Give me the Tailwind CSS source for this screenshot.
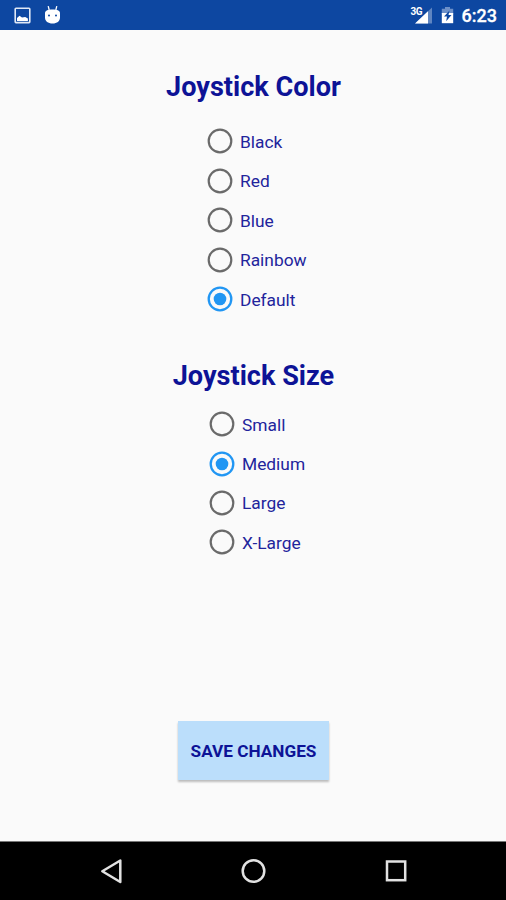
<!DOCTYPE html>
<html lang="en">
<head>
<meta charset="utf-8">
<title>Joystick Settings</title>
<script src="https://cdn.jsdelivr.net/npm/@tailwindcss/browser@4"></script>
</head>
<body class="flex h-[900px] w-[506px] flex-col overflow-hidden bg-[#fafafa] font-['Roboto',sans-serif] text-[#0d1396]">
<svg class="hidden">
  <symbol id="off" viewBox="0 0 26 26"><circle cx="13" cy="13" r="11.300" fill="none" stroke="#6a6a6a" stroke-width="2.200"/></symbol>
  <symbol id="on" viewBox="0 0 26 26"><circle cx="13" cy="13" r="11.300" fill="none" stroke="#2196f3" stroke-width="2.300"/><circle cx="13" cy="13" r="6.300" fill="#2196f3"/></symbol>
</svg>

<header class="flex h-[29.500px] shrink-0 items-center justify-between bg-[#0d47a1] pr-[9px] pl-3.5 text-white">
  <div class="flex items-center gap-[13px]">
    <svg class="mt-[2px] h-[17px] w-[17px]" viewBox="0 0 17 17"><rect x="1.200" y="1.200" width="14.600" height="14.400" rx=".8" fill="none" stroke="#dfe8f5" stroke-width="1.600"/><path d="M3 14V11L5.500 8.800l2.500 1.700 3.200-.4 2.700 1.400V14z" fill="#fff"/></svg>
    <svg class="h-[20px] w-[17px]" viewBox="0 0 17 20"><path d="M4.200 1.200 5.200 5M12.800 1.200 11.800 5" stroke="#fff" stroke-width="1.300"/><path d="M1 8.200C1 5.600 3.800 4.500 8.500 4.500S16 5.600 16 8.200v4.300c0 3.700-3 6-7.500 6S1 16.200 1 12.500z" fill="#fff"/><circle cx="5" cy="10.500" r="1" fill="#0d47a1"/><circle cx="12" cy="10.500" r="1" fill="#0d47a1"/></svg>
  </div>
  <div class="flex items-center">
    <div class="relative h-[18px] w-[22px]">
      <svg class="h-[18px] w-[22px]" viewBox="0 0 22 18"><path d="M22 1.500v16H5z" fill="#5f85c1"/><path d="M18 5.300v12.200H5z" fill="#fff"/></svg>
      <span class="absolute top-0 left-[1px] text-[10px] leading-[11px] font-bold tracking-[-0.5px]">3G</span>
    </div>
    <svg class="ml-[9px] h-[18px] w-[13px]" viewBox="0 0 13 18"><path d="M4 1h5v1.800h3.200V8H.8V2.800H4z" fill="#6d90c8"/><path d="M.8 7h11.400v10.200H.8z" fill="#fff"/><path d="M8.500 4.500 3 10.600h3l-.8 4.600L10.500 9H7.500z" fill="#0d47a1"/></svg>
    <span class="ml-2 translate-y-[1px] text-[18px] leading-[30px] font-medium [-webkit-text-stroke:0.3px_white]">6:23</span>
  </div>
</header>

<main class="flex flex-1 flex-col">
  <h1 class="mt-[41px] pl-[1px] text-center text-[27.100px] leading-8 font-bold whitespace-nowrap">Joystick Color</h1>
  <div class="mt-[19.200px] ml-[207px] flex flex-col text-[17.350px] text-[#22249c]">
    <label class="flex h-[39.450px] items-center gap-[7px]"><svg class="size-[26px]"><use href="#off"/></svg><span class="pt-px">Black</span></label>
    <label class="flex h-[39.450px] items-center gap-[7px]"><svg class="size-[26px]"><use href="#off"/></svg><span class="pt-px">Red</span></label>
    <label class="flex h-[39.450px] items-center gap-[7px]"><svg class="size-[26px]"><use href="#off"/></svg><span class="pt-px">Blue</span></label>
    <label class="flex h-[39.450px] items-center gap-[7px]"><svg class="size-[26px]"><use href="#off"/></svg><span class="pt-px">Rainbow</span></label>
    <label class="flex h-[39.450px] items-center gap-[7px]"><svg class="size-[26px]"><use href="#on"/></svg><span class="pt-px">Default</span></label>
  </div>
  <h1 class="mt-[41px] pl-[1px] text-center text-[27.100px] leading-8 font-bold whitespace-nowrap">Joystick Size</h1>
  <div class="mt-[12.600px] ml-[209px] flex flex-col text-[17.350px] text-[#22249c]">
    <label class="flex h-[39.400px] items-center gap-[7px]"><svg class="size-[26px]"><use href="#off"/></svg><span class="pt-px">Small</span></label>
    <label class="flex h-[39.400px] items-center gap-[7px]"><svg class="size-[26px]"><use href="#on"/></svg><span class="pt-px">Medium</span></label>
    <label class="flex h-[39.400px] items-center gap-[7px]"><svg class="size-[26px]"><use href="#off"/></svg><span class="pt-px">Large</span></label>
    <label class="flex h-[39.400px] items-center gap-[7px]"><svg class="size-[26px]"><use href="#off"/></svg><span class="pt-px">X-Large</span></label>
  </div>
  <button class="mt-auto mb-[61px] ml-[178px] h-[59px] w-[151px] bg-[#bbdefb] pt-[2px] text-[17.200px] font-bold whitespace-nowrap shadow-[0_2px_2px_rgba(0,0,0,0.25)]">SAVE CHANGES</button>
</main>

<nav class="h-[59px] shrink-0 border-t border-[#777] bg-black">
  <svg class="h-[58px] w-[506px]" viewBox="0 0 506 58" fill="none" stroke="#e2e2e2" stroke-width="2.500"><path d="M120.300 18.500v21.500L102.300 29.200z" stroke-linejoin="round"/><circle cx="253.500" cy="29" r="10.800"/><rect x="387" y="19.500" width="18.200" height="18.700"/></svg>
</nav>
</body>
</html>
